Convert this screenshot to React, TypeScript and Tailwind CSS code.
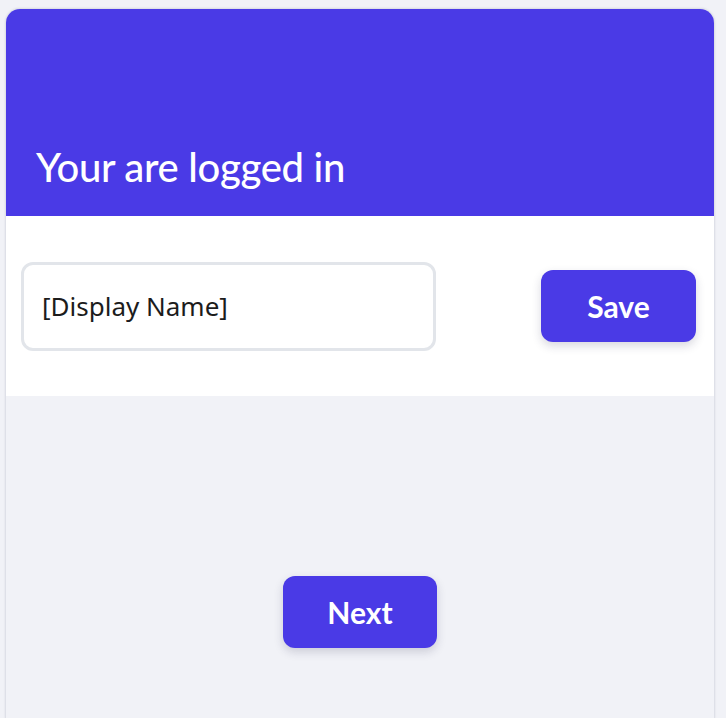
import { useState } from 'react';

export default function App() {
    const [name, setName] = useState('[Display Name]');

    return (
        <div className="min-h-[718px] bg-[#f1f2f7] pt-[9px] pl-[6px] pr-[12px] font-['Lato',sans-serif]">
            <div className="flex flex-col min-h-[709px] rounded-t-[14px] shadow-[0_0_2px_1px_rgba(30,40,80,0.12)] overflow-hidden bg-[#f1f2f7]">
                {/* Header */}
                <div className="h-[207px] bg-[#4a3ae6] flex items-end px-[30px] pb-[29px]">
                    <h1 className="text-[40px] leading-none font-medium text-white tracking-[-0.3px]">
                        Your are logged in
                    </h1>
                </div>

                {/* Name form */}
                <div className="bg-white h-[180px] flex items-center justify-between pl-[15px] pr-[18px]">
                    <input
                        className="w-[415px] h-[89px] rounded-[12px] border-[3px] border-[#e2e5ea] px-[18px] text-[26px] text-[#1c1c1c] font-['Noto_Sans',sans-serif] focus:outline-none"
                        value={name}
                        onChange={e => setName(e.target.value)}
                    />
                    <button className="w-[155px] h-[72px] rounded-[12px] bg-[#4a3ae6] text-white text-[30px] font-bold shadow-[0_4px_10px_rgba(40,40,80,0.18)]">
                        Save
                    </button>
                </div>

                {/* Footer */}
                <div className="flex-1 flex justify-center pt-[180px]">
                    <button className="w-[154px] h-[72px] rounded-[12px] bg-[#4a3ae6] text-white text-[30px] font-bold shadow-[0_4px_10px_rgba(40,40,80,0.18)]">
                        Next
                    </button>
                </div>
            </div>
        </div>
    );
}
